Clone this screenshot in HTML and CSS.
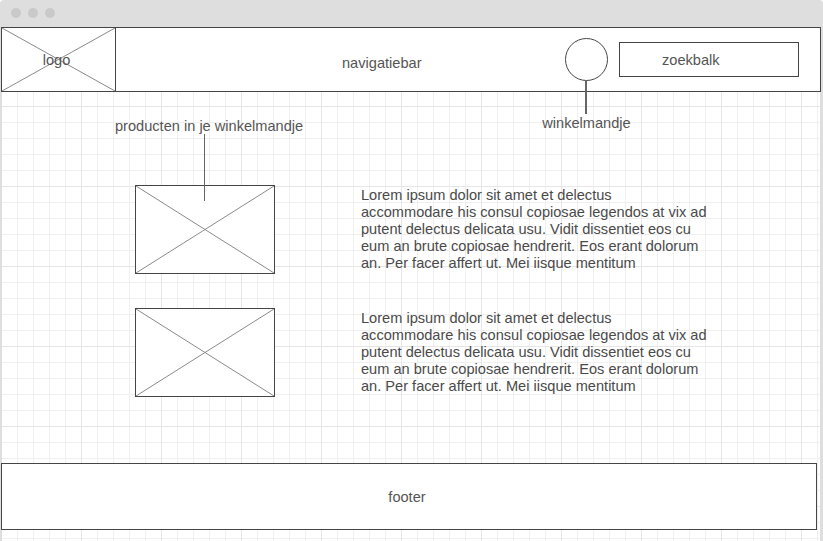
FILE: index.html
```html
<!DOCTYPE html>
<html lang="nl">
<head>
<meta charset="utf-8">
<title>Wireframe</title>
<link rel="stylesheet" href="styles.css">
</head>
<body>
<div class="window">
  <div class="titlebar">
    <span class="dot"></span><span class="dot"></span><span class="dot"></span>
  </div>
  <div class="canvas">
    <header class="header">
      <div class="logo">
        <svg class="cross" viewBox="0 0 100 100" preserveAspectRatio="none"><line x1="0" y1="0" x2="100" y2="100"/><line x1="100" y1="0" x2="0" y2="100"/></svg>
        <span class="logo-text">logo</span>
      </div>
      <div class="nav">navigatiebar</div>
      <div class="cart">
        <span class="cart-label">winkelmandje</span>
      </div>
      <div class="search">zoekbalk</div>
    </header>

    <div class="annot-products">
      <span class="annot-text">producten in je winkelmandje</span>
      <span class="annot-line"></span>
    </div>

    <main class="products">
      <div class="product">
        <div class="image">
          <svg class="cross" viewBox="0 0 100 100" preserveAspectRatio="none"><line x1="0" y1="0" x2="100" y2="100"/><line x1="100" y1="0" x2="0" y2="100"/></svg>
        </div>
        <p class="desc">Lorem ipsum dolor sit amet et delectus<br>accommodare his consul copiosae legendos at vix ad<br>putent delectus delicata usu. Vidit dissentiet eos cu<br>eum an brute copiosae hendrerit. Eos erant dolorum<br>an. Per facer affert ut. Mei iisque mentitum</p>
      </div>
      <div class="product">
        <div class="image">
          <svg class="cross" viewBox="0 0 100 100" preserveAspectRatio="none"><line x1="0" y1="0" x2="100" y2="100"/><line x1="100" y1="0" x2="0" y2="100"/></svg>
        </div>
        <p class="desc">Lorem ipsum dolor sit amet et delectus<br>accommodare his consul copiosae legendos at vix ad<br>putent delectus delicata usu. Vidit dissentiet eos cu<br>eum an brute copiosae hendrerit. Eos erant dolorum<br>an. Per facer affert ut. Mei iisque mentitum</p>
      </div>
    </main>

    <footer class="footer">footer</footer>
  </div>
</div>
</body>
</html>
```
FILE: styles.css
```css
* { box-sizing: border-box; }

html, body {
  margin: 0;
  padding: 0;
  width: 823px;
  height: 541px;
  overflow: hidden;
  background: #ffffff;
}

body {
  font-family: "Liberation Sans", Arial, sans-serif;
  font-size: 14.6px;
  color: #4a4a4a;
}

.window {
  width: 823px;
  height: 541px;
  display: flex;
  flex-direction: column;
  background: #dedede;
  border-radius: 4px 4px 0 0;
  overflow: hidden;
}

.titlebar {
  height: 27px;
  flex: none;
  display: flex;
  align-items: center;
  gap: 7px;
  padding-left: 11px;
  padding-bottom: 1px;
}

.dot {
  width: 10px;
  height: 10px;
  border-radius: 50%;
  background: #c9c9c9;
}

.canvas {
  position: relative;
  flex: 1;
  margin: 0 3px 0 2px;
  background-color: #ffffff;
  background-image:
    linear-gradient(to right, #e6e6e6 1px, transparent 1px),
    linear-gradient(to bottom, #e6e6e6 1px, transparent 1px),
    linear-gradient(to right, #f0f0f0 1px, transparent 1px),
    linear-gradient(to bottom, #f0f0f0 1px, transparent 1px);
  background-size: 80px 80px, 80px 80px, 16px 16px, 16px 16px;
  background-position: 79px 79px, 79px 79px, 15px 15px, 15px 15px;
  display: flex;
  flex-direction: column;
}

/* Header */
.header {
  position: relative;
  z-index: 2;
  margin-left: -1px;
  width: 820px;
  height: 65px;
  flex: none;
  border: 1px solid #454545;
  background: #ffffff;
  display: flex;
  align-items: center;
}

.logo {
  position: relative;
  width: 114px;
  height: 100%;
  border-right: 1px solid #454545;
  display: flex;
  align-items: center;
  justify-content: center;
  padding-right: 4px;
}

.cross {
  position: absolute;
  inset: 0;
  width: 100%;
  height: 100%;
}

.cross line {
  stroke: #8a8a8a;
  stroke-width: 1;
  vector-effect: non-scaling-stroke;
}

.logo-text {
  position: relative;
  color: #555;
}

.nav {
  margin-left: 226px;
  margin-top: 7px;
  color: #555;
}

.cart {
  position: relative;
  margin-left: auto;
  width: 43px;
  height: 43px;
  border: 1px solid #454545;
  border-radius: 50%;
  margin-right: 11px;
}

.cart::after {
  content: "";
  position: absolute;
  left: 19px;
  top: 41px;
  width: 2px;
  height: 34px;
  background: #666;
}

.cart-label {
  position: absolute;
  left: 50%;
  top: 76px;
  transform: translateX(-50%);
  white-space: nowrap;
  line-height: 16px;
  color: #555;
}

.search {
  width: 180px;
  height: 35px;
  border: 1px solid #454545;
  margin-right: 21px;
  padding-left: 42px;
  display: flex;
  align-items: center;
  color: #555;
}

/* Annotation over products */
.annot-products {
  position: absolute;
  left: 113px;
  top: 91px;
  z-index: 3;
}

.annot-text {
  display: block;
  line-height: 16px;
  white-space: nowrap;
  color: #555;
}

.annot-line {
  position: absolute;
  left: 89px;
  top: 16px;
  width: 1px;
  height: 67px;
  background: #666;
}

/* Products */
.products {
  padding: 93px 0 0 133px;
  display: flex;
  flex-direction: column;
  gap: 34px;
}

.product {
  display: flex;
  align-items: center;
}

.image {
  position: relative;
  width: 140px;
  height: 89px;
  flex: none;
  border: 1px solid #454545;
  background: #ffffff;
}

.desc {
  margin: 0 0 0 86px;
  line-height: 17px;
  white-space: nowrap;
  color: #4a4a4a;
}

/* Footer */
.footer {
  margin: 66px 0 0 -1px;
  width: 816px;
  height: 67px;
  flex: none;
  border: 1px solid #454545;
  background: #ffffff;
  display: flex;
  align-items: center;
  justify-content: center;
  padding-right: 4px;
  color: #555;
}
```
